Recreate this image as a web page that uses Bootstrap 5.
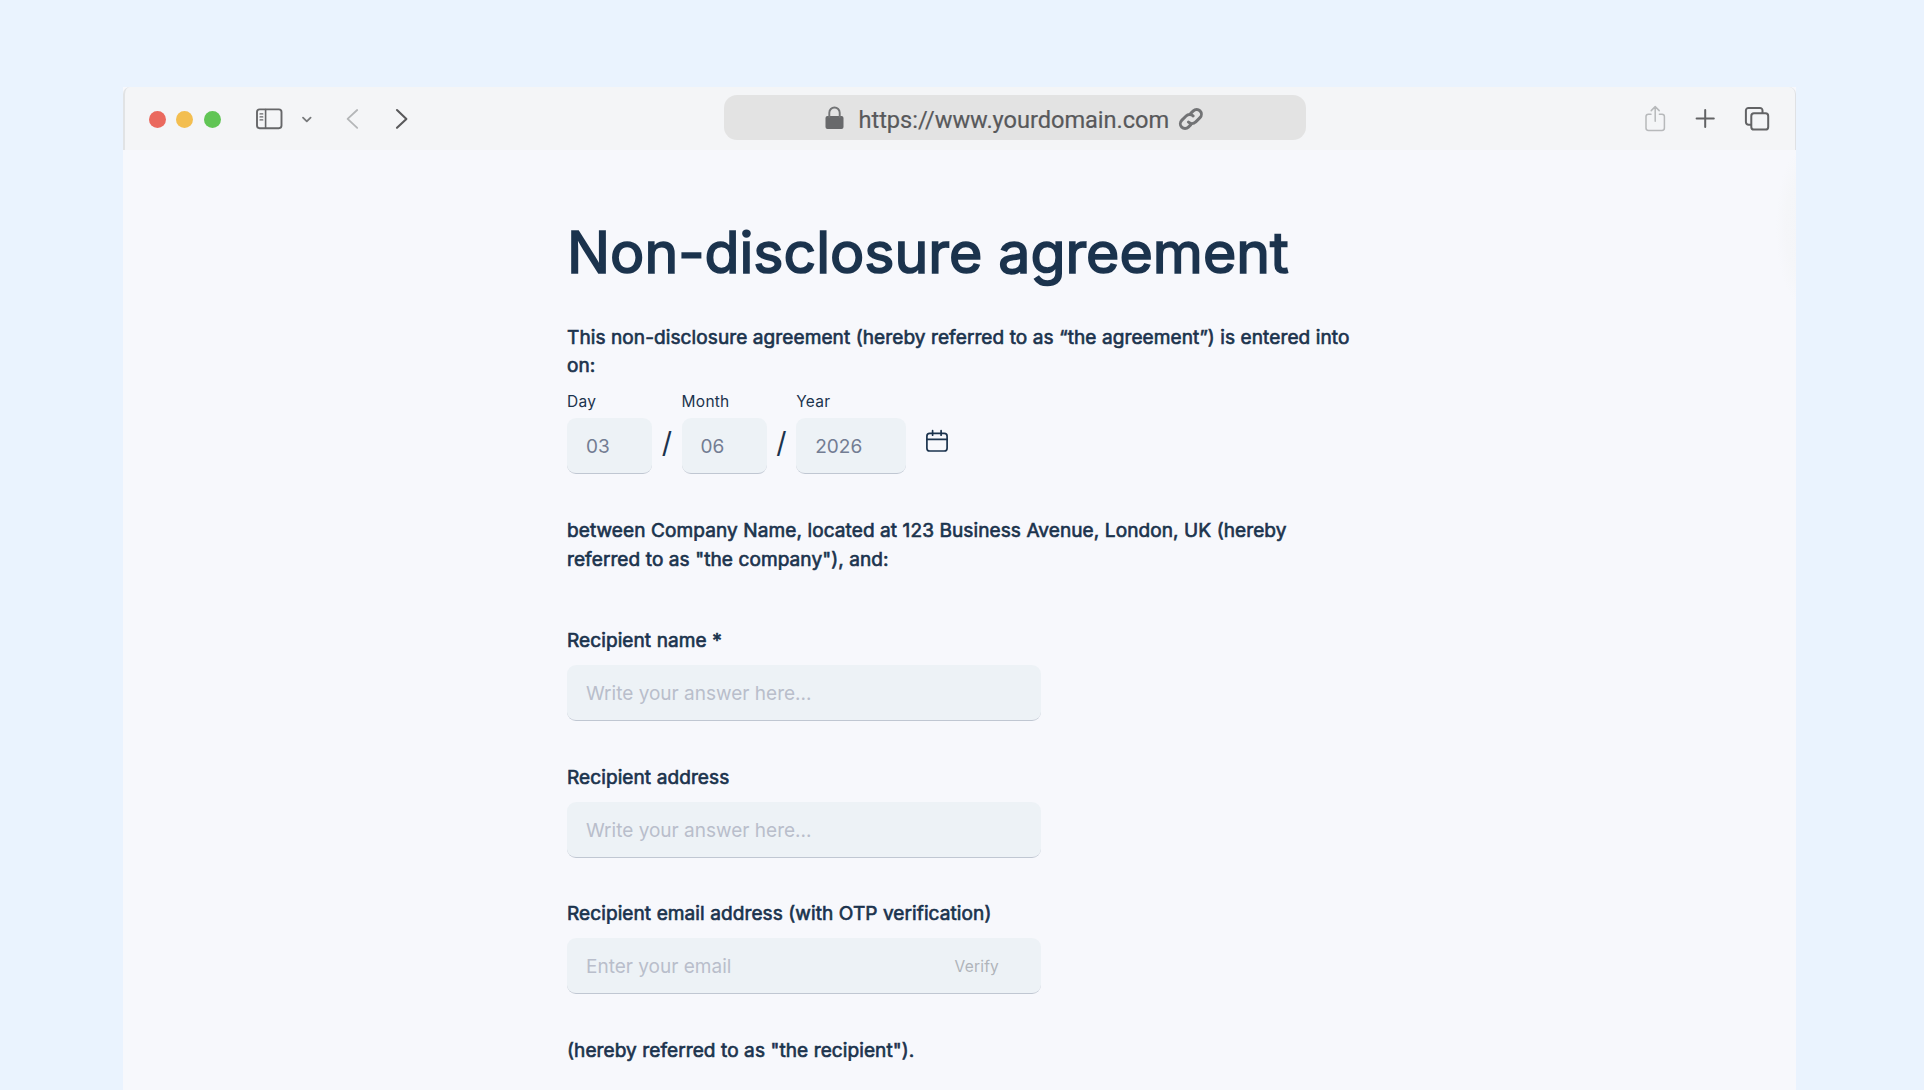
<!DOCTYPE html>
<html lang="en" class="h-100">
<head>
<meta charset="utf-8">
<meta name="viewport" content="width=device-width, initial-scale=1">
<title>Non-disclosure agreement</title>
<link href="https://cdn.jsdelivr.net/npm/bootstrap@5.3.0/dist/css/bootstrap.min.css" rel="stylesheet">
<style>
  body { background: #eaf3fe; color: #1b334d; font-family: Inter, "Liberation Sans", sans-serif; font-size: 19.06px; line-height: 28.6px; height: 100vh; }
  svg { display: block; flex: none; fill: none; stroke-linecap: round; stroke-linejoin: round; }
  .window { width: 1673px; margin: 87px 0 0 123px; height: calc(100vh - 87px); background: radial-gradient(ellipse 24px 76px at 1677px 140px, #f4f5f8 0, #f5f6f9 60%, transparent 100%) #f7f8fc; }
  .toolbar { height: 63px; background: #f4f5f7; border-left: 2px solid #e1e3e5; border-right: 1px solid #dfe1e4; border-radius: 7px 7px 0 0; padding: 1px 25px 0 24px; }
  .side { width: 575px; height: 65px; }
  .dot { width: 17px; height: 17px; margin-right: 10.3px; }
  .address { width: 582px; height: 45px; margin-top: 7.4px; border-radius: 13px; background: #e3e3e3; color: #58595b; font: 400 23.6px/28px Roboto, sans-serif; letter-spacing: -.03px; padding-left: 101px; -webkit-text-stroke: .2px; }
  .agreement { width: 790px; margin-left: 444px; padding-top: 68px; }
  .heavy { font-weight: 400; font-size: 19.06px; line-height: 28.6px; letter-spacing: .083px; -webkit-text-stroke: .65px #1b334d; margin: 0; }
  h1.heavy { font-size: 57.2px; line-height: 70px; letter-spacing: 0; -webkit-text-stroke-width: 1.7px; margin-bottom: 35.8px; }
  .small-label { font-size: 15.5px; line-height: 20px; letter-spacing: .25px; margin: 11px 0 6px; display: block; }
  .field, .field:focus { height: 56px; border: 0; border-bottom: 1.4px solid #c0c7d2; border-radius: 9px; background: #edf2f6; padding: 2px 19px 0; font-size: 19.02px; color: #737d93; box-shadow: none; }
  .field::placeholder { color: #b9becb; opacity: 1; }
  .w-part { width: 85px; } .w-year { width: 110px; } .w-wide { width: 474px; }
  .slash { font-size: 28.6px; line-height: 56px; width: 29.6px; padding-top: 34px; height: 90px; }
  .question { height: 136.5px; }
  .question .field { margin-top: 9px; }
  .verify { position: absolute; right: 42px; top: 18.5px; font-size: 15.5px; line-height: 20px; letter-spacing: .2px; color: #b0b4ba; }
</style>
</head>
<body class="overflow-hidden">
<div class="window">
  <header class="toolbar d-flex align-items-center">
    <div class="side d-flex align-items-center">
      <span class="dot rounded-circle" style="background:#ea695e"></span>
      <span class="dot rounded-circle" style="background:#f3be50"></span>
      <span class="dot rounded-circle" style="background:#61c555"></span>
      <svg width="200" height="28" viewBox="231 105 200 28" stroke="#666769">
        <rect x="257" y="109.4" width="24.5" height="18.8" rx="2.6" stroke-width="1.9"/>
        <path d="M265.6 109.5v18.6" stroke-width="1.6"/><path d="M260 113.9h2.8M260 116.9h2.8M260 119.9h2.8" stroke-width="1.2"/>
        <path d="M303 117.6l3.8 3.8 3.8-3.8" stroke-width="1.8" stroke="#77797b"/>
        <path d="M357.2 110l-9.6 8.9 9.6 8.9" stroke-width="1.8" stroke="#b4b6b8"/>
        <path d="M397 110l9.4 8.9-9.4 8.9" stroke-width="2.1" stroke="#59595b"/>
      </svg>
    </div>
    <div class="address d-flex align-self-start">
      <svg class="me-3" width="19" height="24" viewBox="0 0 19 24" style="margin-top:10.6px"><rect x=".5" y="10" width="18" height="13" rx="2" fill="#68696b"/><path d="M4.3 11V6.7a5.2 5.2 0 0 1 10.4 0V11" stroke="#737476" stroke-width="1.9"/></svg>
      <span style="margin-top:10.6px;margin-left:-1.5px">https://www.yourdomain.com</span>
      <svg width="26" height="26" viewBox="0 0 26 26" stroke="#727375" stroke-width="2.9" style="margin:10.4px 0 0 9px"><path d="M10.4 16.1a4.8 4.8 0 0 0 7.1 0l4.5-4.5a4.7 4.7 0 0 0-6.7-6.7l-2.6 2.5"/><path d="M15.2 10a4.8 4.8 0 0 0-7.1 0l-4.4 4.4a4.7 4.7 0 0 0 6.7 6.7l2.5-2.5"/></svg>
    </div>
    <svg class="ms-auto" width="126" height="28" viewBox="1644 105 126 28" stroke="#626365">
      <g stroke="#b7b9bb" stroke-width="1.5"><path d="M1651 114.2h-2.6a2.4 2.4 0 0 0-2.4 2.4v11.4a2.4 2.4 0 0 0 2.4 2.4h13.6a2.4 2.4 0 0 0 2.4-2.4v-11.4a2.4 2.4 0 0 0-2.4-2.4h-2.6M1655.2 121.3v-14.4M1651.2 110.6l4-4 4 4"/></g>
      <path d="M1696.6 118.5h17.2M1705.2 109.9v17.2" stroke-width="2"/>
      <path d="M1751 124.7h-2.5a2.6 2.6 0 0 1-2.6-2.6v-11.6a2.6 2.6 0 0 1 2.6-2.6h11.4a2.6 2.6 0 0 1 2.6 2.6v2.4" stroke-width="2"/><rect x="1751.3" y="113.2" width="16.9" height="16.4" rx="2.7" stroke-width="2"/>
    </svg>
  </header>

  <main class="agreement">
    <h1 class="heavy">Non-disclosure agreement</h1>
    <p class="heavy">This non-disclosure agreement (hereby referred to as “the agreement”) is entered into<br>on:</p>
    <div class="d-flex">
      <div><label class="small-label" for="day">Day</label><input id="day" class="form-control field w-part" value="03"></div>
      <span class="slash text-center">/</span>
      <div><label class="small-label" for="month">Month</label><input id="month" class="form-control field w-part" value="06"></div>
      <span class="slash text-center">/</span>
      <div><label class="small-label" for="year">Year</label><input id="year" class="form-control field w-year" value="2026"></div>
      <svg width="24" height="24" viewBox="0 0 24 24" stroke="#1b334d" stroke-width="1.7" style="margin:48.4px 0 0 18.5px"><rect x="1.9" y="4.4" width="20.2" height="17.6" rx="2.8"/><path d="M1.9 10.4h20.2M7.6 1.7v4.5M16.1 1.7v4.5"/></svg>
    </div>
    <p class="heavy" style="margin:43px 0 53.3px">between Company Name, located at 123 Business Avenue, London, UK (hereby<br>referred to as "the company"), and:</p>
    <div class="question"><label class="heavy d-block" for="rname">Recipient name *</label><input id="rname" class="form-control field w-wide" placeholder="Write your answer here..."></div>
    <div class="question"><label class="heavy d-block" for="raddr">Recipient address</label><input id="raddr" class="form-control field w-wide" placeholder="Write your answer here..."></div>
    <div class="question"><label class="heavy d-block" for="remail">Recipient email address (with OTP verification)</label>
      <div class="position-relative w-wide"><input id="remail" class="form-control field" placeholder="Enter your email"><span class="verify">Verify</span></div></div>
    <p class="heavy">(hereby referred to as "the recipient").</p>
  </main>
</div>
<script src="https://cdn.jsdelivr.net/npm/bootstrap@5.3.0/dist/js/bootstrap.bundle.min.js"></script>
</body>
</html>
